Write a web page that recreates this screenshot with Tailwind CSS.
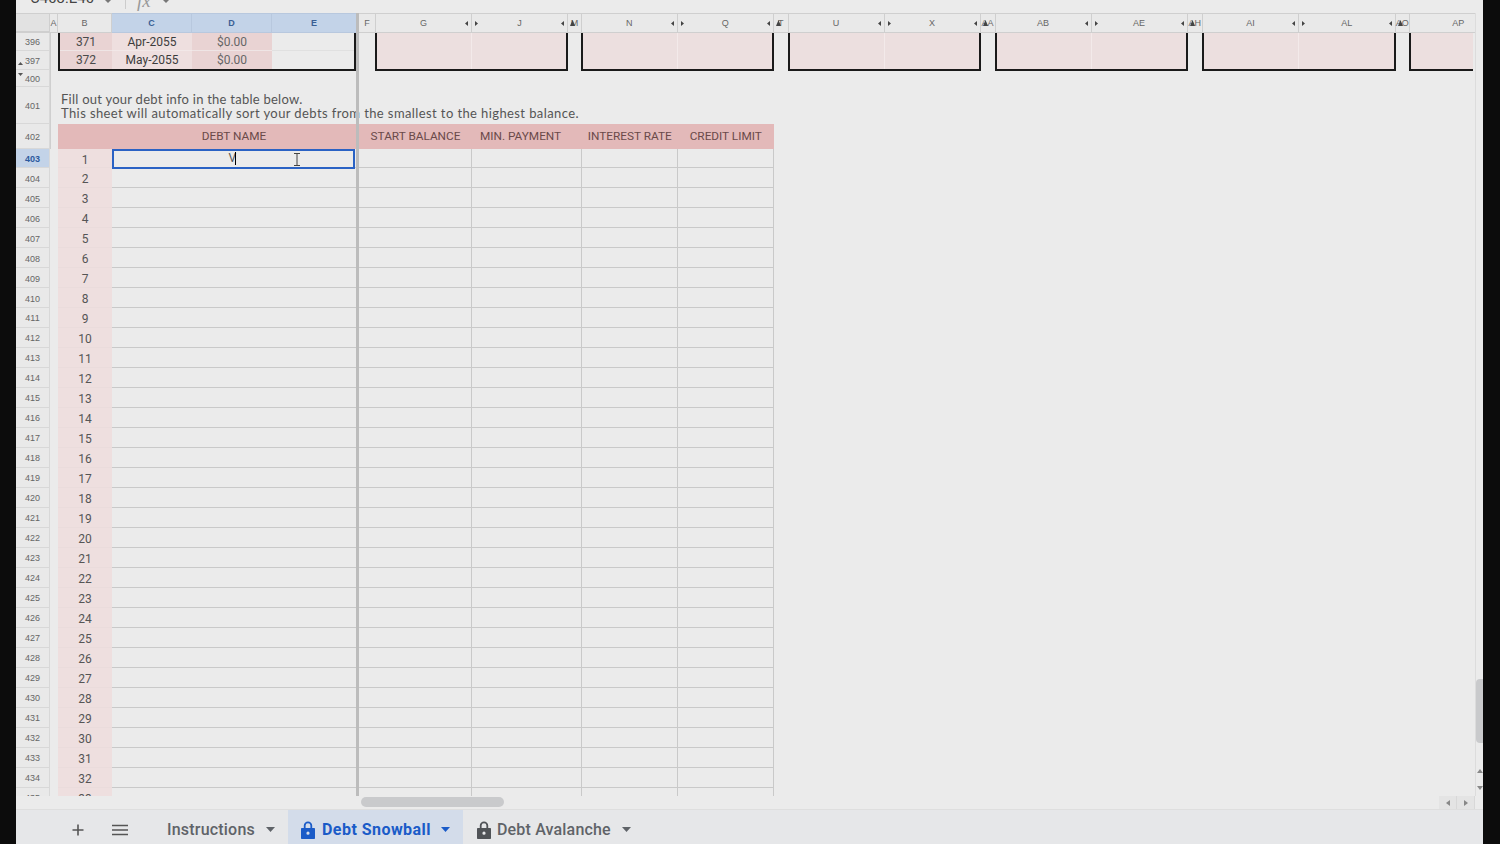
<!DOCTYPE html>
<html lang="en">
<head>
    <meta charset="UTF-8">
    <meta name="viewport" content="width=device-width, initial-scale=1.0">
    <title>Debt Snowball</title>
    <script src="https://cdn.jsdelivr.net/npm/@tailwindcss/browser@4"></script>
</head>
<body class="bg-black h-screen overflow-hidden font-['Roboto',sans-serif]">
<div class="flex h-[844px] w-[1500px]">
    <div class="w-4 bg-[#0c0c0c]"></div>

    <div class="w-[1467px] flex flex-col bg-[#ebebeb]">
        <!-- formula bar, cut off by the video crop -->
        <div class="h-[13px] flex overflow-hidden text-[#444] shrink-0">
            <div class="w-[88px] pl-[14px] text-[15px] leading-[16px] mt-[-10px] whitespace-nowrap">C403:E40</div>
            <svg class="w-[6px] h-[3px] ml-[1px]" viewBox="0 0 8 4"><path d="M0 0h8L4 4z" fill="#777"/></svg>
            <div class="w-px h-[9px] bg-[#ccc] ml-[14px]"></div>
            <div class="ml-[11px] mt-[-7px] text-[19px] leading-[16px] italic text-[#999] font-['Liberation_Serif',serif] w-[20px]">fx</div>
            <svg class="w-[6px] h-[3px] ml-[6px]" viewBox="0 0 8 4"><path d="M0 0h8L4 4z" fill="#777"/></svg>
        </div>

        <!-- sheet -->
        <div id="sheet" class="h-[783px] shrink-0 overflow-hidden grid grid-cols-[34px_8px_54px_80px_80px_84px_3px_17px_96px_96px_14px_95.5px_96.5px_14.5px_96px_96px_15px_96px_96px_15.5px_96px_96.5px_14.5px_64.5px_8.5px] grid-rows-[20px_18px_19px_17px_37px_24.5px_repeat(33,19.97px)] text-[#444]">

            <!-- freeze bar -->
            <div class="col-start-7 row-span-full relative z-10 bg-[#bcbcbc]"></div>
            <!-- right gutter with the vertical scrollbar -->
            <div class="col-start-25 row-span-full relative z-10 border-l border-[#dcdcdc] bg-[#ebebeb]">
                <div class="absolute left-0 top-[666px] w-2 h-[64px] rounded-l bg-[#c9cacc]"></div>
                <svg class="absolute left-[1px] top-[756px] w-[6px] h-1" viewBox="0 0 6 4"><path d="M0 4h6L3 0z" fill="#888"/></svg>
                <svg class="absolute left-[1px] top-[773px] w-[6px] h-1" viewBox="0 0 6 4"><path d="M0 0h6L3 4z" fill="#888"/></svg>
            </div>

            <!-- column headers -->
            <div class="col-span-full row-start-1 grid grid-cols-subgrid text-[9px] text-[#666] text-center leading-[18px] font-['Liberation_Sans',sans-serif]">
                <div class="bg-[#e2e2e2] border-b-2 border-t border-r border-[#cfcfcf]"></div>
                <div class="border-y border-r border-[#cfcfcf] bg-[#e9e9e9]">A</div>
                <div class="border-y border-r border-[#cfcfcf] bg-[#e9e9e9] font-medium">B</div>
                <div class="border-y border-r border-[#b8c8de] bg-[#c3d3e8] text-[#3a5f94] font-bold">C</div>
                <div class="border-y border-r border-[#b8c8de] bg-[#c3d3e8] text-[#3a5f94] font-bold">D</div>
                <div class="border-y border-[#b8c8de] bg-[#c3d3e8] text-[#3a5f94] font-bold">E</div>
                <div></div>
                <div class="border-y border-r border-[#cfcfcf] bg-[#e9e9e9]">F</div>
                <div class="col-hdr" data-arrows="l">G</div>
                <div class="col-hdr" data-arrows="rl">J</div>
                <div class="narrow-hdr">M</div>
                <div class="col-hdr" data-arrows="l">N</div>
                <div class="col-hdr" data-arrows="rl">Q</div>
                <div class="narrow-hdr">T</div>
                <div class="col-hdr" data-arrows="l">U</div>
                <div class="col-hdr" data-arrows="rl">X</div>
                <div class="narrow-hdr">AA</div>
                <div class="col-hdr" data-arrows="l">AB</div>
                <div class="col-hdr" data-arrows="rl">AE</div>
                <div class="narrow-hdr">AH</div>
                <div class="col-hdr" data-arrows="l">AI</div>
                <div class="col-hdr" data-arrows="rl">AL</div>
                <div class="narrow-hdr">AO</div>
                <div class="border-y border-[#cfcfcf] bg-[#e9e9e9] pl-[32px]">AP</div>
                <div class="bg-[#e2e2e2] border-y border-[#cfcfcf]"></div>
            </div>

            <!-- row headers for the rows above the table -->
            <div class="col-start-1 row-start-2 row-hdr">396</div>
            <div class="col-start-1 row-start-3 row-hdr relative">397
                <svg class="absolute left-[2px] top-[11px] w-[5px] h-[3px]" viewBox="0 0 5 3"><path d="M0 3h5L2.5 0z" fill="#555"/></svg>
            </div>
            <div class="col-start-1 row-start-4 row-hdr relative">400
                <svg class="absolute left-[2px] top-[3px] w-[5px] h-[3px]" viewBox="0 0 5 3"><path d="M0 0h5L2.5 3z" fill="#555"/></svg>
            </div>
            <div class="col-start-1 row-start-5 row-hdr">401</div>
            <div class="col-start-1 row-start-6 row-hdr">402</div>
            <div class="col-start-2 row-start-2 row-end-7 bg-[#ebebeb] border-l border-[#cfcfcf]"></div>

            <!-- boxes left from the table above -->
            <div class="col-start-3 col-span-4 row-start-2 row-span-2 grid grid-cols-[52px_80px_80px_1fr] grid-rows-[18px_18px] border-x-2 border-b-2 border-[#1a1a1a] h-[38px] text-center text-[12px] leading-[18px]">
                <div class="bg-[#e9d3d3] border-b border-[#efe5e5] text-[#4a4a4a]">371</div>
                <div class="bg-[#eedfdf] border-b border-[#f2e8e8] text-[#3c3c3c]">Apr-2055</div>
                <div class="bg-[#e9d3d3] border-b border-[#efe5e5] text-[#666]">$0.00</div>
                <div class="border-b border-[#e0e0e0]"></div>
                <div class="bg-[#e9d3d3] text-[#4a4a4a]">372</div>
                <div class="bg-[#eedfdf] text-[#3c3c3c]">May-2055</div>
                <div class="bg-[#e9d3d3] text-[#666]">$0.00</div>
                <div></div>
            </div>
            <div class="col-start-9 col-span-2 row-start-2 row-span-2 h-[38px] ml-[-1px] border-x-2 border-b-2 border-[#1a1a1a] bg-[#ecdfdf] pink-box"></div>
            <div class="col-start-12 col-span-2 row-start-2 row-span-2 h-[38px] ml-[-1px] border-x-2 border-b-2 border-[#1a1a1a] bg-[#ecdfdf] pink-box"></div>
            <div class="col-start-15 col-span-2 row-start-2 row-span-2 h-[38px] ml-[-1px] border-x-2 border-b-2 border-[#1a1a1a] bg-[#ecdfdf] pink-box"></div>
            <div class="col-start-18 col-span-2 row-start-2 row-span-2 h-[38px] ml-[-1px] border-x-2 border-b-2 border-[#1a1a1a] bg-[#ecdfdf] pink-box"></div>
            <div class="col-start-21 col-span-2 row-start-2 row-span-2 h-[38px] ml-[-1px] border-x-2 border-b-2 border-[#1a1a1a] bg-[#ecdfdf] pink-box"></div>
            <div class="col-start-24 row-start-2 row-span-2 h-[38px] ml-[-1px] mr-[1.5px] border-l-2 border-b-2 border-[#1a1a1a] bg-[#ecdfdf]"></div>

            <!-- intro text -->
            <div class="col-start-3 col-span-12 row-start-5 pl-[3px] pt-[5px] text-[13px] leading-[14px] text-[#555] whitespace-nowrap font-['Lato',sans-serif]">
                <p class="tracking-[0.25px]">Fill out your debt info in the table below.</p>
                <p class="tracking-[0.4px]">This sheet will automatically sort your debts from the smallest to the highest balance.</p>
            </div>

            <!-- table header -->
            <div class="col-start-3 col-span-4 row-start-6 bg-[#e3b9b9] text-center text-[11.8px] leading-[25px] text-[#6a4a4a] pl-[54px]">DEBT NAME</div>
            <div class="col-start-8 col-span-2 row-start-6 bg-[#e3b9b9] text-center text-[11.8px] leading-[25px] text-[#6a4a4a]">START BALANCE</div>
            <div class="col-start-10 col-span-2 row-start-6 bg-[#e3b9b9] text-[11.8px] leading-[25px] text-[#6a4a4a] pl-[8px]">MIN. PAYMENT</div>
            <div class="col-start-12 row-start-6 bg-[#e3b9b9] text-center text-[11.8px] leading-[25px] text-[#6a4a4a]">INTEREST RATE</div>
            <div class="col-start-13 row-start-6 bg-[#e3b9b9] text-center text-[11.8px] leading-[25px] text-[#6a4a4a]">CREDIT LIMIT</div>
        </div>

        <!-- horizontal scrollbar -->
        <div class="h-[14px] shrink-0 relative border-b border-[#dedede]">
            <div class="absolute left-[345px] top-[1px] w-[143px] h-[10px] rounded-full bg-[#c9cacc]"></div>
            <div class="absolute right-[8px] top-0 w-[36px] h-[13px] flex">
                <div class="w-[18px] flex items-center justify-center bg-[#e4e4e4] border-r border-[#d8d8d8]"><svg class="w-1 h-[6px]" viewBox="0 0 4 6"><path d="M4 0v6L0 3z" fill="#888"/></svg></div>
                <div class="w-[18px] flex items-center justify-center bg-[#e4e4e4] border-r border-[#d8d8d8]"><svg class="w-1 h-[6px]" viewBox="0 0 4 6"><path d="M0 0v6l4-3z" fill="#888"/></svg></div>
            </div>
        </div>

        <!-- sheet tabs -->
        <div class="flex-1 flex bg-[#e6e7e9] text-[16px] font-medium text-[#5f6368]">
            <div class="flex items-center pt-[5px]">
                <svg class="w-[12px] h-[12px] ml-[56px]" viewBox="0 0 12 12"><path d="M6 0.5v11M0.5 6h11" stroke="#555" stroke-width="1.6"/></svg>
                <svg class="w-[16px] h-[12px] ml-[28px]" viewBox="0 0 16 12"><path d="M0 1.5h16M0 6h16M0 10.5h16" stroke="#555" stroke-width="1.5"/></svg>
            </div>
            <div class="ml-[39px] w-[121px] flex items-center pt-[5px] tracking-[0.2px]">
                <span class="w-[88px] whitespace-nowrap">Instructions</span>
                <svg class="w-[9px] h-[5px] ml-[11px]" viewBox="0 0 9 5"><path d="M0 0h9L4.5 5z" fill="#5f6368"/></svg>
            </div>
            <div class="w-[175px] flex items-center pt-[5px] bg-[#d3dcea] text-[#1a5bc8] font-bold tracking-[0.45px]">
                <svg class="w-[14px] h-[18px] ml-[13px]" viewBox="0 0 14 18"><path d="M2.8 7V4.6a4.2 4.2 0 0 1 8.4 0V7H13.2a.8.8 0 0 1 .8.8v9.4a.8.8 0 0 1-.8.8H.8a.8.8 0 0 1-.8-.8V7.8A.8.8 0 0 1 .8 7zM4.6 7h4.8V4.6a2.4 2.4 0 0 0-4.8 0zM7 10.6a1.6 1.6 0 1 0 0 3.2 1.6 1.6 0 0 0 0-3.2z" fill="#1a5bc8" fill-rule="evenodd"/></svg>
                <span class="ml-[7px] w-[108px] whitespace-nowrap">Debt Snowball</span>
                <svg class="w-[9px] h-[5px] ml-[11px]" viewBox="0 0 9 5"><path d="M0 0h9L4.5 5z" fill="#1a5bc8"/></svg>
            </div>
            <div class="flex items-center pt-[5px] tracking-[0.17px]">
                <svg class="w-[14px] h-[18px] ml-[14px]" viewBox="0 0 14 18"><path d="M2.8 7V4.6a4.2 4.2 0 0 1 8.4 0V7H13.2a.8.8 0 0 1 .8.8v9.4a.8.8 0 0 1-.8.8H.8a.8.8 0 0 1-.8-.8V7.8A.8.8 0 0 1 .8 7zM4.6 7h4.8V4.6a2.4 2.4 0 0 0-4.8 0zM7 10.6a1.6 1.6 0 1 0 0 3.2 1.6 1.6 0 0 0 0-3.2z" fill="#505357" fill-rule="evenodd"/></svg>
                <span class="ml-[6px] w-[114px] whitespace-nowrap">Debt Avalanche</span>
                <svg class="w-[9px] h-[5px] ml-[11px]" viewBox="0 0 9 5"><path d="M0 0h9L4.5 5z" fill="#5f6368"/></svg>
            </div>
        </div>
    </div>

    <div class="w-[17px] bg-[#0c0c0c]"></div>
</div>

<script>
    const sheet = document.getElementById("sheet");
    const hdrClass = "flex items-center justify-center pt-[3px] text-[9px] text-[#666] font-['Liberation_Sans',sans-serif] bg-[#e9e9e9] border-b border-r border-[#d8d8d8]";

    // row numbers on the left edge
    document.querySelectorAll(".row-hdr").forEach(el => el.className += " " + hdrClass);

    // wide column headers with the little group arrows
    document.querySelectorAll(".col-hdr").forEach(el => {
        el.className = "relative border-y border-r border-[#cfcfcf] bg-[#e9e9e9]";
        el.insertAdjacentHTML("beforeend", '<svg class="absolute right-[3px] top-[7px] w-[3px] h-[5px]" viewBox="0 0 3 5"><path d="M3 0v5L0 2.5z" fill="#444"/></svg>');
        if (el.dataset.arrows === "rl") {
            el.insertAdjacentHTML("beforeend", '<svg class="absolute left-[3px] top-[7px] w-[3px] h-[5px]" viewBox="0 0 3 5"><path d="M0 0v5l3-2.5z" fill="#444"/></svg>');
        }
    });

    // hidden column groups: the arrow sits on top of the letters
    document.querySelectorAll(".narrow-hdr").forEach(el => {
        el.className = "relative border-y border-r border-[#cfcfcf] bg-[#e9e9e9] whitespace-nowrap";
        el.insertAdjacentHTML("beforeend", '<svg class="absolute left-[2px] top-[6px] w-[5px] h-[6px]" viewBox="0 0 5 6"><path d="M2.5 0L5 6H0z" fill="#444"/></svg>');
    });

    // faint white seam down the middle of the pink boxes
    document.querySelectorAll(".pink-box").forEach(el => {
        el.insertAdjacentHTML("beforeend", '<div class="h-full w-px bg-[#f3eaea] ml-[94px]"></div>');
    });

    // table rows 403-435
    for (let i = 0; i < 33; i++) {
        const active = i === 0;
        const row = document.createElement("div");
        row.className = "col-span-full grid grid-cols-subgrid grid-rows-[19.97px]";
        row.style.gridRowStart = i + 7;
        row.innerHTML = `
            <div class="${hdrClass} ${active ? "!bg-[#c3d3e8] !text-[#2c5a9e] font-bold" : ""}">${403 + i}</div>
            <div class="bg-[#ebebeb]"></div>
            <div class="bg-[#eedfdf] border-b border-[#eadcdc] text-center pt-[2px] text-[12px] leading-[19px] text-[#555]">${i + 1}</div>
            <div class="col-span-3 relative border-b border-[#c9c9c9]">${active ? `
                <div class="absolute left-0 top-0 w-[242.5px] h-[20px] border-2 border-[#2a62c4] z-20 flex justify-center text-[12px] leading-[14px] text-[#555]"><span class="ml-[-2px]">V</span><span class="w-px h-[13px] bg-black ml-[-1px] mt-[1px]"></span></div>
                <svg class="absolute left-[182px] top-[4px] w-[6px] h-[13px] z-30" viewBox="0 0 6 13"><path d="M0 .5h6M0 12.5h6M3 .5v12" stroke="#444" stroke-width="1" fill="none"/></svg>` : ""}</div>
            <div></div>
            <div class="col-span-2 border-b border-r border-[#c9c9c9]"></div>
            <div class="col-span-2 border-b border-r border-[#c9c9c9]"></div>
            <div class="border-b border-r border-[#c9c9c9]"></div>
            <div class="border-b border-r border-[#c9c9c9]"></div>`;
        sheet.appendChild(row);
    }
</script>
</body>
</html>
